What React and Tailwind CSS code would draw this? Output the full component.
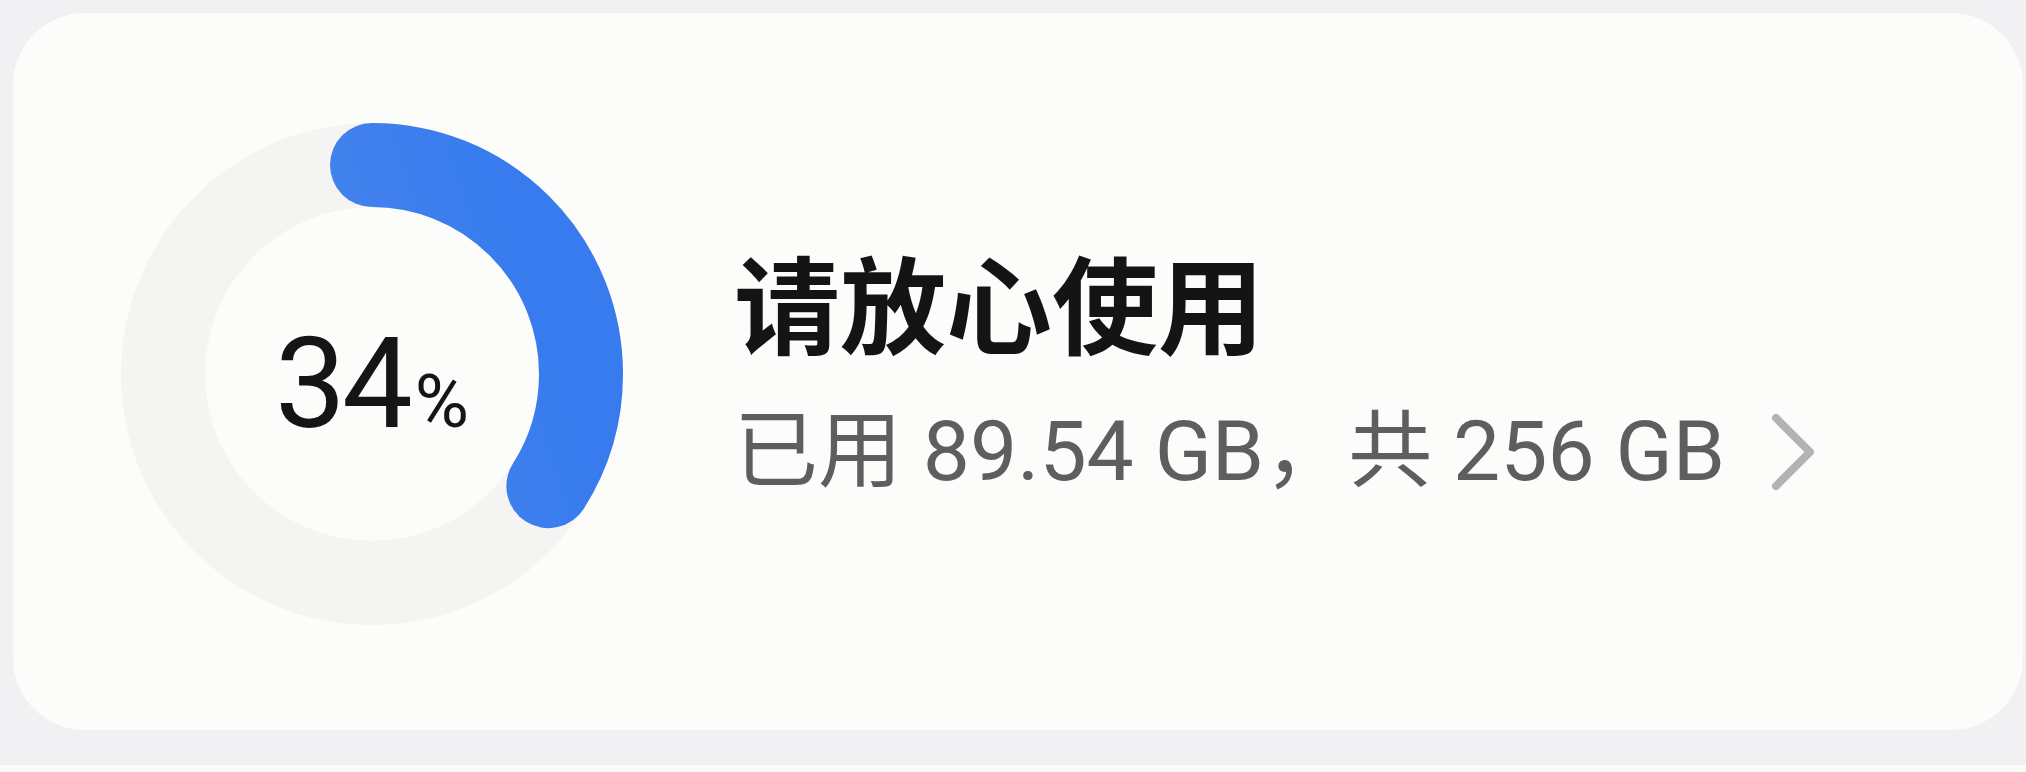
import React from "react";

const RADIUS = 209;
const STROKE = 84;
const SIZE = 502;
const C = SIZE / 2;

function UsageRing({ percent }) {
  const circumference = 2 * Math.PI * RADIUS;
  const filled = (percent / 100) * circumference;
  return (
    <div className="grid">
      <svg
        width={SIZE}
        height={SIZE}
        viewBox={`0 0 ${SIZE} ${SIZE}`}
        className="col-start-1 row-start-1"
      >
        <defs>
          <linearGradient id="ringBlue" gradientUnits="userSpaceOnUse" x1="200" y1="30" x2="330" y2="420">
            <stop offset="0%" stopColor="#5c8de4" />
            <stop offset="45%" stopColor="#4684eb" />
            <stop offset="100%" stopColor="#377bef" />
          </linearGradient>
        </defs>
        <circle cx={C} cy={C} r={RADIUS} fill="none" stroke="#f4f4f3" strokeWidth={STROKE} />
        <circle
          cx={C}
          cy={C}
          r={RADIUS}
          fill="none"
          stroke="url(#ringBlue)"
          strokeWidth={STROKE}
          strokeLinecap="round"
          strokeDasharray={`${filled} ${circumference}`}
          transform={`rotate(-90 ${C} ${C})`}
        />
      </svg>
      <div className="col-start-1 row-start-1 flex items-baseline justify-center self-center mt-[20px] font-['Roboto',sans-serif] text-[#151515] leading-none">
        <span className="text-[126px] tracking-[-4px]">{percent}</span>
        <span className="text-[74px] ml-[6px]">%</span>
      </div>
    </div>
  );
}

function Chevron() {
  return (
    <svg width="44" height="76" viewBox="0 0 44 76" className="ml-[46px] self-center">
      <path
        d="M5 4 L39 38 L5 72"
        fill="none"
        stroke="#b3b3b3"
        strokeWidth="8"
        strokeLinecap="round"
        strokeLinejoin="round"
      />
    </svg>
  );
}

export default function App() {
  return (
    <div className="w-[2026px] h-[772px] bg-[#f1f1f3] pt-[13px] pl-[13px] pr-[3px] pb-[35px] border-b-[7px] border-[#fafafa]">
      <div className="h-full rounded-[72px] bg-[#fcfcfa] flex items-start pl-[108px]">
        <div className="mt-[110px]">
          <UsageRing percent={34} />
        </div>
        <div className="ml-[111px] mt-[234px] flex flex-col">
          <div className="text-[106px] leading-none font-bold text-[#141414] font-['Noto_Sans_CJK_SC',sans-serif]">
            请放心使用
          </div>
          <div className="mt-[57px] flex items-center text-[84px] leading-none text-[#5e5e5e] font-['Roboto','Noto_Sans_CJK_SC',sans-serif]">
            <span>已用 89.54 GB，共 256 GB</span>
            <Chevron />
          </div>
        </div>
      </div>
    </div>
  );
}
